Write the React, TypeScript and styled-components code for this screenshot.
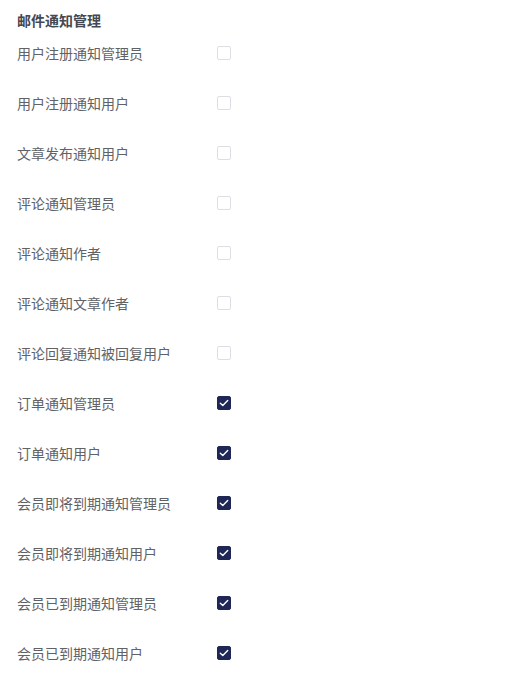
import React, { useState } from 'react'
import styled, { createGlobalStyle } from 'styled-components'

const GlobalStyle = createGlobalStyle`
  body {
    margin: 0;
    background: #fff;
    font-family: "Noto Sans CJK SC", "Liberation Sans", sans-serif;
  }
`

interface NotifyItem {
  key: string;
  label: string;
  enabled: boolean;
}

const initialItems: NotifyItem[] = [
  { key: 'regAdmin', label: '用户注册通知管理员', enabled: false },
  { key: 'regUser', label: '用户注册通知用户', enabled: false },
  { key: 'postUser', label: '文章发布通知用户', enabled: false },
  { key: 'commentAdmin', label: '评论通知管理员', enabled: false },
  { key: 'commentAuthor', label: '评论通知作者', enabled: false },
  { key: 'commentPostAuthor', label: '评论通知文章作者', enabled: false },
  { key: 'replyUser', label: '评论回复通知被回复用户', enabled: false },
  { key: 'orderAdmin', label: '订单通知管理员', enabled: true },
  { key: 'orderUser', label: '订单通知用户', enabled: true },
  { key: 'vipSoonAdmin', label: '会员即将到期通知管理员', enabled: true },
  { key: 'vipSoonUser', label: '会员即将到期通知用户', enabled: true },
  { key: 'vipExpAdmin', label: '会员已到期通知管理员', enabled: true },
  { key: 'vipExpUser', label: '会员已到期通知用户', enabled: true },
]

const App: React.FC = () => {
  const [items, setItems] = useState<NotifyItem[]>(initialItems)

  const toggle = (key: string) => {
    setItems(items.map(i => (i.key === key ? { ...i, enabled: !i.enabled } : i)))
  }

  return (
    <>
      <GlobalStyle />
      <Panel>
        <Title>邮件通知管理</Title>
        {items.map(item => (
          <Row key={item.key}>
            <Label>{item.label}</Label>
            <Box checked={item.enabled} onClick={() => toggle(item.key)}>
              {item.enabled && (
                <svg width="10" height="8" viewBox="0 0 10 8">
                  <path d="M1.3 4.2 L3.8 6.5 L8.7 1.5" fill="none" stroke="#fff" strokeWidth="1.4" strokeLinecap="round" strokeLinejoin="round" />
                </svg>
              )}
            </Box>
          </Row>
        ))}
      </Panel>
    </>
  )
}

const Panel = styled.div`
  padding: 12px 17px;
`
const Title = styled.div`
  font-size: 14px;
  font-weight: 700;
  line-height: 16px;
  color: #444851;
`
const Row = styled.div`
  display: flex;
  align-items: center;
  height: 50px;
`
const Label = styled.div`
  width: 200px;
  font-size: 14px;
  line-height: 16px;
  padding-bottom: 1px;
  color: #606266;
`
const Box = styled.div<{ checked: boolean }>`
  box-sizing: border-box;
  width: 14px;
  height: 14px;
  border-radius: 2px;
  border: 1px solid ${p => (p.checked ? '#1e2756' : '#dcdfe6')};
  background: ${p => (p.checked ? '#1e2756' : '#fff')};
  display: flex;
  align-items: center;
  justify-content: center;
  cursor: pointer;
`

export default App
